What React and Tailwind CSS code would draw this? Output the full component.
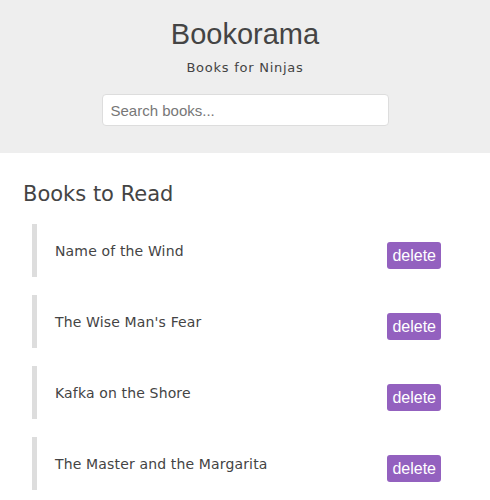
import React from 'react';

// Lista de leitura: cabeçalho com busca e itens com botão de remover.
const books = [
  'Name of the Wind',
  "The Wise Man's Fear",
  'Kafka on the Shore',
  'The Master and the Margarita',
];

function BookItem({ title }) {
  return (
    <li className="h-[53px] ml-[9px] mr-[26px] border-l-[5px] border-[#dddddd] flex items-start justify-between pl-[18px]">
      <span className="mt-[17px] leading-[20px] text-[14px] tracking-[0.15px] text-[#444] font-['DejaVu_Sans',Verdana,sans-serif]">
        {title}
      </span>
      <button className="mt-[18px] h-[27px] px-[5px] rounded-[3px] bg-[#9361bf] text-white text-[16px] leading-[27px] font-['Liberation_Sans',Arial,sans-serif]">
        delete
      </button>
    </li>
  );
}

export default function App() {
  return (
    <div className="w-[490px] min-h-[500px] bg-white">
      <header className="h-[153px] bg-[#eeeeee] flex flex-col items-center">
        <h1 className="pt-[17px] text-[29px] leading-[34px] text-[#444] font-['Liberation_Sans',Arial,sans-serif]">
          Bookorama
        </h1>
        <p className="mt-[7px] text-[13px] leading-[20px] tracking-[0.75px] text-[#444] font-['DejaVu_Sans',Verdana,sans-serif]">
          Books for Ninjas
        </p>
        <input
          placeholder="Search books..."
          className="mt-[16px] w-[287px] h-[32px] px-[8px] bg-white border border-[#dddddd] rounded-[4px] text-[15px] text-[#444] placeholder:text-[#777] outline-none font-['Liberation_Sans',Arial,sans-serif]"
        />
      </header>
      <main className="pt-[27px] px-[23px]">
        <h2 className="text-[21px] leading-[28px] text-[#444] font-['DejaVu_Sans',Verdana,sans-serif]">
          Books to Read
        </h2>
        <ul className="mt-[16px] flex flex-col gap-[18px]">
          {books.map((b) => (
            <BookItem key={b} title={b} />
          ))}
        </ul>
      </main>
    </div>
  );
}
